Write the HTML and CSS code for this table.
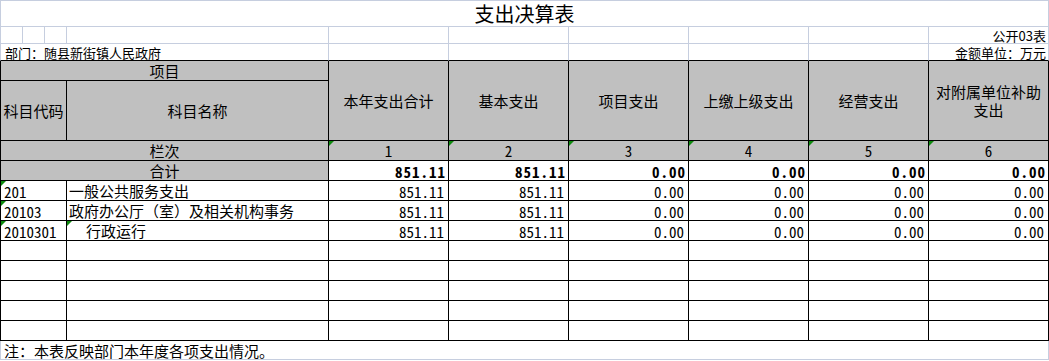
FILE: index.html
```html
<!DOCTYPE html>
<html lang="zh-CN">
<head>
<meta charset="utf-8">
<title>支出决算表</title>
<link rel="stylesheet" href="styles.css">
</head>
<body>
<div class="sheet">
  <!-- row 1: title -->
  <div class="c L top title span-all">支出决算表</div>

  <!-- row 2 -->
  <div class="c L"></div>
  <div class="c"></div>
  <div class="c"></div>
  <div class="c"></div>
  <div class="c"></div>
  <div class="c"></div>
  <div class="c"></div>
  <div class="c"></div>
  <div class="c"></div>
  <div class="c small right">公开03表</div>

  <!-- row 3 -->
  <div class="c L bb small span-1-4 left">部门：随县新街镇人民政府</div>
  <div class="c bb"></div>
  <div class="c bb"></div>
  <div class="c bb"></div>
  <div class="c bb"></div>
  <div class="c bb"></div>
  <div class="c bb small right">金额单位：万元</div>

  <!-- header -->
  <div class="c t L g ctr span-1-4">项目</div>
  <div class="c t g ctr hdr">本年支出合计</div>
  <div class="c t g ctr hdr">基本支出</div>
  <div class="c t g ctr hdr">项目支出</div>
  <div class="c t g ctr hdr">上缴上级支出</div>
  <div class="c t g ctr hdr">经营支出</div>
  <div class="c t g ctr hdr wrap"><span class="ln">对附属单位补助</span><span class="ln">支出</span></div>
  <div class="c t L g ctr span-1-3">科目代码</div>
  <div class="c t g ctr">科目名称</div>

  <!-- 栏次 -->
  <div class="c t L g ctr span-1-4">栏次</div>
  <div class="c t g ctr num tri">1</div>
  <div class="c t g ctr num tri">2</div>
  <div class="c t g ctr num tri">3</div>
  <div class="c t g ctr num tri">4</div>
  <div class="c t g ctr num tri">5</div>
  <div class="c t g ctr num tri">6</div>

  <!-- 合计 -->
  <div class="c t L g ctr span-1-4">合计</div>
  <div class="c t num amt bold">851.11</div>
  <div class="c t num amt bold">851.11</div>
  <div class="c t num amt bold">0.00</div>
  <div class="c t num amt bold">0.00</div>
  <div class="c t num amt bold">0.00</div>
  <div class="c t num amt bold">0.00</div>

  <!-- data rows -->
  <div class="c t L num code tri span-1-3">201</div>
  <div class="c t name">一般公共服务支出</div>
  <div class="c t num amt">851.11</div>
  <div class="c t num amt">851.11</div>
  <div class="c t num amt">0.00</div>
  <div class="c t num amt">0.00</div>
  <div class="c t num amt">0.00</div>
  <div class="c t num amt">0.00</div>

  <div class="c t L num code tri span-1-3">20103</div>
  <div class="c t name">政府办公厅（室）及相关机构事务</div>
  <div class="c t num amt">851.11</div>
  <div class="c t num amt">851.11</div>
  <div class="c t num amt">0.00</div>
  <div class="c t num amt">0.00</div>
  <div class="c t num amt">0.00</div>
  <div class="c t num amt">0.00</div>

  <div class="c t L num code tri span-1-3">2010301</div>
  <div class="c t name indent tri">行政运行</div>
  <div class="c t num amt">851.11</div>
  <div class="c t num amt">851.11</div>
  <div class="c t num amt">0.00</div>
  <div class="c t num amt">0.00</div>
  <div class="c t num amt">0.00</div>
  <div class="c t num amt">0.00</div>

  <!-- empty rows -->
  <div class="c t L span-1-3"></div><div class="c t"></div><div class="c t"></div><div class="c t"></div><div class="c t"></div><div class="c t"></div><div class="c t"></div><div class="c t"></div>
  <div class="c t L span-1-3"></div><div class="c t"></div><div class="c t"></div><div class="c t"></div><div class="c t"></div><div class="c t"></div><div class="c t"></div><div class="c t"></div>
  <div class="c t L span-1-3"></div><div class="c t"></div><div class="c t"></div><div class="c t"></div><div class="c t"></div><div class="c t"></div><div class="c t"></div><div class="c t"></div>
  <div class="c t L span-1-3"></div><div class="c t"></div><div class="c t"></div><div class="c t"></div><div class="c t"></div><div class="c t"></div><div class="c t"></div><div class="c t"></div>
  <div class="c t L span-1-3"></div><div class="c t"></div><div class="c t"></div><div class="c t"></div><div class="c t"></div><div class="c t"></div><div class="c t"></div><div class="c t"></div>

  <!-- note -->
  <div class="c L note span-all">注：本表反映部门本年度各项支出情况。</div>
</div>
</body>
</html>
```

FILE: styles.css
```css
html, body {
  margin: 0;
  padding: 0;
  background: #ffffff;
}

.sheet {
  display: grid;
  grid-template-columns: 23px 22px 22px 262px repeat(6, 120px);
  grid-template-rows: 27px 17px 17px 20px 60px repeat(10, 20px) 19px;
  width: 1049px;
  font-family: "Noto Sans CJK SC", "Noto Sans", sans-serif;
  font-size: 15px;
  color: #000;
}

.c {
  box-sizing: border-box;
  border-right: 1px solid #c6cedf;
  border-bottom: 1px solid #c6cedf;
  display: flex;
  align-items: center;
  white-space: nowrap;
  line-height: 1;
  position: relative;
  min-width: 0;
}

.L { border-left: 1px solid #c6cedf; }
.top { border-top: 1px solid #c6cedf; }
.bb { border-bottom-color: #000; }

.t { border-right-color: #000; border-bottom-color: #000; }
.t.L { border-left-color: #000; }

.g { background: #c0c0c0; }

.span-all { grid-column: 1 / -1; }
.span-1-4 { grid-column: 1 / 5; }
.span-1-3 { grid-column: 1 / 4; }
.hdr { grid-row: span 2; }

.title {
  justify-content: center;
  align-items: flex-end;
  font-size: 20px;
  padding-bottom: 2px;
}

.small {
  font-size: 13px;
  align-items: flex-end;
  padding-bottom: 1px;
}
.right { justify-content: flex-end; padding-right: 2px; }
.left { justify-content: flex-start; padding-left: 4px; }

.ctr { justify-content: center; text-align: center; }

.wrap {
  flex-direction: column;
  gap: 3px;
  padding-bottom: 1px;
}
.ln {
  display: block;
  height: 15px;
  line-height: 15px;
}

.num {
  font-family: "Noto Sans Mono CJK SC", "DejaVu Sans Mono", monospace;
  font-size: 15px;
}

.amt {
  justify-content: flex-end;
  padding-right: 4px;
  padding-top: 2px;
}

.bold {
  font-weight: bold;
  letter-spacing: 1px;
  padding-right: 3px;
  padding-top: 1px;
}
.bold::after { content: ""; margin-right: -1px; }

.code { padding-left: 3px; padding-top: 2px; }

.name { padding-left: 2px; }
.indent { padding-left: 19px; }

.note {
  padding-left: 3px;
  align-items: flex-end;
  padding-bottom: 1px;
}

.tri::before {
  content: "";
  position: absolute;
  left: 0;
  top: 0;
  width: 0;
  height: 0;
  border-top: 5px solid #0f8a0f;
  border-right: 5px solid transparent;
}
```
